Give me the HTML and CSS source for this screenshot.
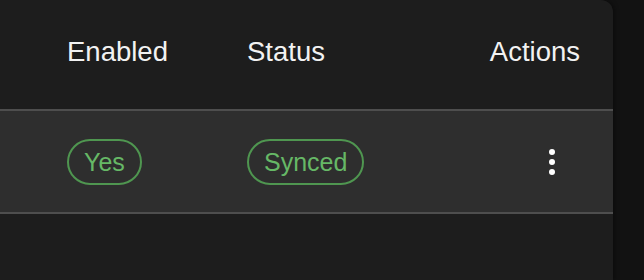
FILE: index.html
```html
<!DOCTYPE html>
<html lang="en">
<head>
  <meta charset="UTF-8" />
  <meta name="viewport" content="width=device-width, initial-scale=1" />
  <title>Sync Table</title>
  <link rel="stylesheet" href="styles.css">
</head>
<body>

  <div class="card">
    <div class="table-row table-head">
      <div class="cell">Enabled</div>
      <div class="cell">Status</div>
      <div class="cell cell-actions">Actions</div>
    </div>

    <div class="table-row table-body">
      <div class="cell">
        <span class="pill">Yes</span>
      </div>
      <div class="cell">
        <span class="pill">Synced</span>
      </div>
      <div class="cell cell-actions">
        <button class="menu-btn" title="More actions">
          <span class="dot"></span>
          <span class="dot"></span>
          <span class="dot"></span>
        </button>
      </div>
    </div>
  </div>

</body>
</html>
```

FILE: styles.css
```css
* {
  box-sizing: border-box;
}

body {
  margin: 0;
  background-color: #121212;
  color: #f2f2f2;
  font-family: "Liberation Sans", Arial, sans-serif;
}

.card {
  width: 613px;
  min-height: 280px;
  background-color: #1d1d1d;
  border-top-right-radius: 12px;
  box-shadow: 2px 0 4px rgba(0, 0, 0, 0.35);
}

.table-row {
  display: grid;
  grid-template-columns: 180px 1fr auto;
  align-items: center;
  padding: 0 33px 0 67px;
  border-bottom: 2px solid #4e4e4e;
}

.table-head {
  height: 111px;
  padding-bottom: 6px;
  font-size: 27.5px;
  line-height: 1;
}

.table-body {
  height: 103px;
  background-color: #2e2e2e;
}

.cell-actions {
  text-align: right;
  display: flex;
  justify-content: flex-end;
}

.pill {
  display: inline-block;
  height: 46px;
  padding: 0 15px;
  border: 2px solid #4f9650;
  border-radius: 23px;
  color: #66b866;
  font-size: 25px;
  line-height: 42px;
}

.menu-btn {
  width: 56px;
  height: 40px;
  padding: 0;
  background: none;
  border: none;
  cursor: pointer;
  display: flex;
  flex-direction: column;
  align-items: center;
  justify-content: center;
  gap: 4px;
}

.dot {
  width: 6px;
  height: 6px;
  border-radius: 50%;
  background-color: #fff;
}
```
